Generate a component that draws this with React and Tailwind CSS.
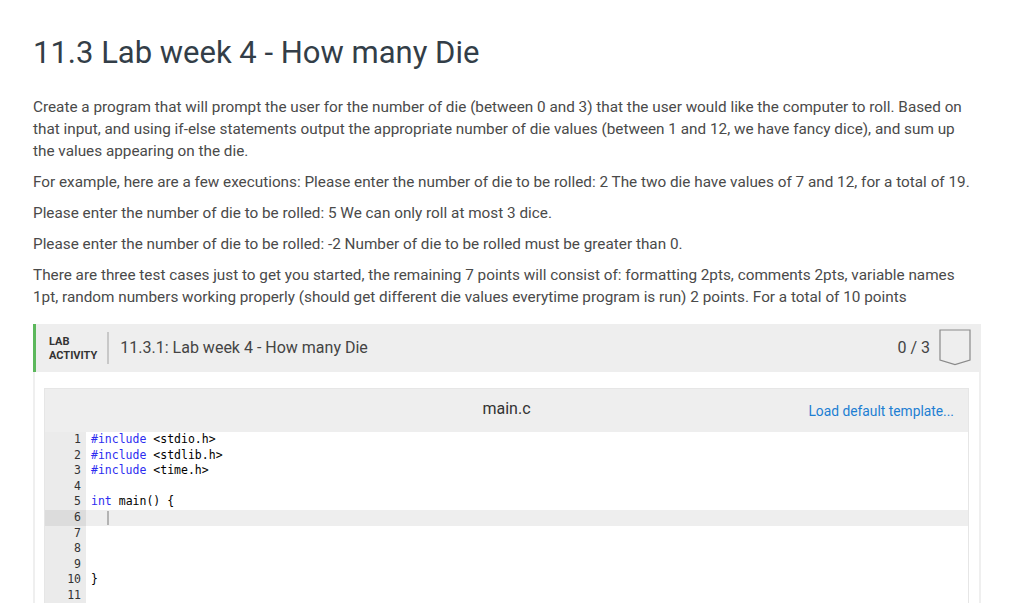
import React from "react";

const codeLines = [
  [{ t: "#include", k: true }, { t: " <stdio.h>" }],
  [{ t: "#include", k: true }, { t: " <stdlib.h>" }],
  [{ t: "#include", k: true }, { t: " <time.h>" }],
  [],
  [{ t: "int", k: true }, { t: " main() {" }],
  [],
  [],
  [],
  [],
  [{ t: "}" }],
  [],
];

const ACTIVE = 5;

function CodeEditor() {
  return (
    <div className="border border-[#e6e6e6]">
      {/* file header */}
      <div className="h-[43px] bg-[#eeeeee] flex items-center relative">
        <div className="flex-1 text-center text-[16px] text-[#333] pb-[3px]">main.c</div>
        <button className="absolute right-[14px] top-[12px] text-[13.8px] text-[#1d7fd3]">
          Load default template...
        </button>
      </div>

      {/* code */}
      <div
        className="flex text-[11.5px] leading-[15.6px] pb-[6px]"
        style={{ fontFamily: '"DejaVu Sans Mono", "Liberation Mono", monospace' }}
      >
        <div className="w-[41px] bg-[#ebebeb] text-[#333] text-right">
          {codeLines.map((_, i) => (
            <div key={i} className={`pr-[5px] ${i === ACTIVE ? "bg-[#dcdcdc]" : ""}`}>
              {i + 1}
            </div>
          ))}
        </div>
        <div className="flex-1 text-black">
          {codeLines.map((line, i) => (
            <div
              key={i}
              className={`pl-[5px] h-[15.6px] whitespace-pre relative ${i === ACTIVE ? "bg-[#eeeeee]" : ""}`}
            >
              {line.map((seg, j) => (
                <span key={j} className={seg.k ? "text-[#2d2df0]" : ""}>
                  {seg.t}
                </span>
              ))}
              {i === ACTIVE && (
                <span className="absolute left-[21px] top-[1px] w-[2px] h-[14px] bg-[#b3b3b3]" />
              )}
            </div>
          ))}
        </div>
      </div>
    </div>
  );
}

function LabActivity() {
  return (
    <div className="mt-[16px]">
      <div className="h-[48px] bg-[#eeeeee] border-l-[3px] border-[#5cb85c] flex items-center pl-[13px] pr-[10px]">
        <div className="text-[11px] leading-[14px] font-bold text-[#333] uppercase pt-[1px]">
          <div>Lab</div>
          <div>Activity</div>
        </div>
        <div className="w-[2px] h-[32px] bg-[#c8c8c8] ml-[10px] mr-[11px]" />
        <div className="flex-1 text-[16px] text-[#444]">11.3.1: Lab week 4 - How many Die</div>
        <div className="text-[16px] text-[#444] mr-[9px]">0 / 3</div>
        <svg width="32" height="37" viewBox="0 0 32 37" className="mb-[2px]">
          <path d="M1 1 H31 V31 L16 35.5 L1 31 Z" fill="none" stroke="#8a8a8a" strokeWidth="1.2" />
        </svg>
      </div>
      <div className="border-x-2 border-[#efefef] px-[9px] pt-[16px] pr-[10px] pb-[20px]">
        <CodeEditor />
      </div>
    </div>
  );
}

export default function App() {
  return (
    <div className="min-h-screen bg-white" style={{ fontFamily: "Roboto, 'Noto Sans', sans-serif" }}>
      <div className="pl-[33px] pt-[35px] w-[981px]">
        <h1 className="text-[31px] leading-[36px] text-[#333e48] font-normal">
          11.3 Lab week 4 - How many Die
        </h1>
        <div className="mt-[25px] text-[15.3px] leading-[22px] text-[#4a4a4a] pr-[10px] flex flex-col gap-[9px]">
          <p>
            Create a program that will prompt the user for the number of die (between 0 and 3) that the user
            would like the computer to roll. Based on that input, and using if-else statements output the
            appropriate number of die values (between 1 and 12, we have fancy dice), and sum up the values
            appearing on the die.
          </p>
          <p>
            For example, here are a few executions: Please enter the number of die to be rolled: 2 The two die
            have values of 7 and 12, for a total of 19.
          </p>
          <p>Please enter the number of die to be rolled: 5 We can only roll at most 3 dice.</p>
          <p>Please enter the number of die to be rolled: -2 Number of die to be rolled must be greater than 0.</p>
          <p>
            There are three test cases just to get you started, the remaining 7 points will consist of: formatting
            2pts, comments 2pts, variable names 1pt, random numbers working properly (should get different die
            values everytime program is run) 2 points. For a total of 10 points
          </p>
        </div>
        <LabActivity />
      </div>
    </div>
  );
}
